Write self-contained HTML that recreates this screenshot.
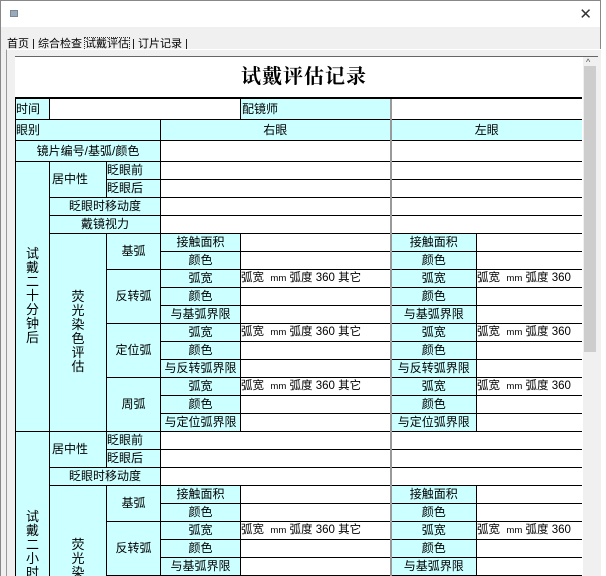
<!DOCTYPE html>
<html><head><meta charset="utf-8"><style>
*{box-sizing:border-box;margin:0;padding:0}
html,body{width:606px;height:576px;overflow:hidden}
body{background:#fff;font-family:"Liberation Sans","Noto Sans CJK SC",sans-serif;font-size:12px;color:#000;position:relative}
.win{position:absolute;left:0;top:0;width:601px;height:576px;border:1px solid #888;border-bottom:none;background:#f0f0f0}
.title{position:absolute;left:0;top:0;width:599px;height:26px;background:#fff}
.ico{position:absolute;left:9px;top:9px;width:8px;height:7px;background:#9ab;border:1px solid #789}
.x{position:absolute;right:8px;top:4px;font-size:15px;color:#333}
.tabs{position:absolute;left:6px;top:34px;font-size:11px;color:#000;white-space:nowrap}
.tabs span.sel{outline:1px dotted #333}
.panel{position:absolute;left:5px;top:48px;width:595px;height:528px;border-top:1px solid #fff;border-left:1px solid #999;background:#f0f0f0}
.inner{position:absolute;left:15px;top:56px;width:583px;height:520px;background:#fff;border-top:1px solid #666;overflow:hidden}
.sb{position:absolute;left:583px;top:57px;width:15px;height:519px;background:#f0f0f0}
.sb .thumb{position:absolute;left:1px;top:9px;width:12px;height:286px;background:#cdcdcd}
.sb .up{position:absolute;left:3px;top:0;font-size:9px;color:#555}
.clip{position:absolute;left:15px;top:57px;width:567px;height:519px;overflow:hidden}
table{border-collapse:collapse;table-layout:fixed;width:567px}
td{border:1px solid #000;height:18px;padding:0;text-align:center;white-space:nowrap;overflow:hidden;line-height:16px}
td.c{background:#ccffff}
td.l{text-align:left}
td.v{text-align:left;font-size:11.5px}
td.g{border-left:2px solid #999}
.vt{line-height:14px;font-size:13px}
h1{font-family:"Liberation Serif","Noto Serif CJK SC",serif;font-size:20px;font-weight:bold;letter-spacing:1px}
</style></head><body>
<div class="win">
<div class="title"><div class="ico"></div><div class="x">✕</div></div>
<div class="tabs">首页 | 综合检查 <span class="sel">试戴评估</span> | 订片记录 |</div>
<div class="panel"></div>
</div>
<div class="inner"></div>
<div class="sb"><div class="up">^</div><div class="thumb"></div></div>
<div class="clip">
<table>
<colgroup><col style="width:34px"><col style="width:57px"><col style="width:54px"><col style="width:80px"><col style="width:150px"><col style="width:86px"><col style="width:106px"></colgroup>
<tr><td colspan="7" style="height:41px;border-top:none;border-left:none;border-right:none;border-bottom:2px solid #000;padding-left:10px"><h1>试戴评估记录</h1></td></tr>
<tr><td class="c l" style="height:21px">时间</td><td colspan="3"></td><td class="c l" style="padding-left:1px">配镜师</td><td colspan="2" class="g"></td></tr>
<tr><td class="c l" colspan="3" style="height:21px">眼别</td><td class="c" colspan="2">右眼</td><td class="c g" colspan="2">左眼</td></tr>
<tr><td class="c" colspan="3" style="height:21px">镜片编号/基弧/颜色</td><td colspan="2"></td><td colspan="2" class="g"></td></tr>

<tr><td class="c vt" rowspan="15">试<br>戴<br>二<br>十<br>分<br>钟<br>后</td><td class="c l" rowspan="2" style="padding-left:2px">居中性</td><td class="c l">眨眼前</td><td colspan="2"></td><td colspan="2" class="g"></td></tr>
<tr><td class="c l">眨眼后</td><td colspan="2"></td><td colspan="2" class="g"></td></tr>
<tr><td class="c" colspan="2">眨眼时移动度</td><td colspan="2"></td><td colspan="2" class="g"></td></tr>
<tr><td class="c" colspan="2">戴镜视力</td><td colspan="2"></td><td colspan="2" class="g"></td></tr>
<tr><td class="c vt" rowspan="11">荧<br>光<br>染<br>色<br>评<br>估</td><td class="c" rowspan="2">基弧</td><td class="c">接触面积</td><td></td><td class="c g">接触面积</td><td></td></tr>
<tr><td class="c">颜色</td><td></td><td class="c g">颜色</td><td></td></tr>
<tr><td class="c" rowspan="3">反转弧</td><td class="c">弧宽</td><td class="v">弧宽 &nbsp;<small>mm</small> 弧度 360 其它</td><td class="c g">弧宽</td><td class="v">弧宽 &nbsp;<small>mm</small> 弧度 360</td></tr>
<tr><td class="c">颜色</td><td></td><td class="c g">颜色</td><td></td></tr>
<tr><td class="c">与基弧界限</td><td></td><td class="c g">与基弧界限</td><td></td></tr>
<tr><td class="c" rowspan="3">定位弧</td><td class="c">弧宽</td><td class="v">弧宽 &nbsp;<small>mm</small> 弧度 360 其它</td><td class="c g">弧宽</td><td class="v">弧宽 &nbsp;<small>mm</small> 弧度 360</td></tr>
<tr><td class="c">颜色</td><td></td><td class="c g">颜色</td><td></td></tr>
<tr><td class="c">与反转弧界限</td><td></td><td class="c g">与反转弧界限</td><td></td></tr>
<tr><td class="c" rowspan="3">周弧</td><td class="c">弧宽</td><td class="v">弧宽 &nbsp;<small>mm</small> 弧度 360 其它</td><td class="c g">弧宽</td><td class="v">弧宽 &nbsp;<small>mm</small> 弧度 360</td></tr>
<tr><td class="c">颜色</td><td></td><td class="c g">颜色</td><td></td></tr>
<tr><td class="c">与定位弧界限</td><td></td><td class="c g">与定位弧界限</td><td></td></tr>

<tr><td class="c vt" rowspan="10" style="vertical-align:top;padding-top:78px">试<br>戴<br>二<br>小<br>时<br>后</td><td class="c l" rowspan="2" style="padding-left:2px">居中性</td><td class="c l">眨眼前</td><td colspan="2"></td><td colspan="2" class="g"></td></tr>
<tr><td class="c l">眨眼后</td><td colspan="2"></td><td colspan="2" class="g"></td></tr>
<tr><td class="c" colspan="2">眨眼时移动度</td><td colspan="2"></td><td colspan="2" class="g"></td></tr>
<tr><td class="c vt" rowspan="7" style="vertical-align:top;padding-top:52px">荧<br>光<br>染</td><td class="c" rowspan="2">基弧</td><td class="c">接触面积</td><td></td><td class="c g">接触面积</td><td></td></tr>
<tr><td class="c">颜色</td><td></td><td class="c g">颜色</td><td></td></tr>
<tr><td class="c" rowspan="3">反转弧</td><td class="c">弧宽</td><td class="v">弧宽 &nbsp;<small>mm</small> 弧度 360 其它</td><td class="c g">弧宽</td><td class="v">弧宽 &nbsp;<small>mm</small> 弧度 360</td></tr>
<tr><td class="c">颜色</td><td></td><td class="c g">颜色</td><td></td></tr>
<tr><td class="c">与基弧界限</td><td></td><td class="c g">与基弧界限</td><td></td></tr>
<tr><td class="c" rowspan="2">定位弧</td><td class="c">弧宽</td><td class="v">弧宽 &nbsp;<small>mm</small> 弧度 360 其它</td><td class="c g">弧宽</td><td class="v">弧宽 &nbsp;<small>mm</small> 弧度 360</td></tr>
<tr><td class="c">颜色</td><td></td><td class="c g">颜色</td><td></td></tr>
</table>
</div>
</body></html>
